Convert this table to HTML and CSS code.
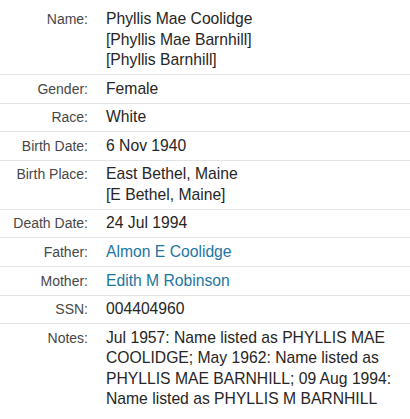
FILE: index.html
```html
<!DOCTYPE html>
<html>
<head>
<meta charset="utf-8">
<link rel="stylesheet" href="styles.css">
</head>
<body>
<div class="record">
  <div class="row"><div class="label">Name:</div><div class="value">Phyllis Mae Coolidge<br>[Phyllis Mae Barnhill]<br>[Phyllis Barnhill]</div></div>
  <div class="row"><div class="label">Gender:</div><div class="value">Female</div></div>
  <div class="row"><div class="label">Race:</div><div class="value">White</div></div>
  <div class="row"><div class="label">Birth Date:</div><div class="value">6 Nov 1940</div></div>
  <div class="row"><div class="label">Birth Place:</div><div class="value">East Bethel, Maine<br>[E Bethel, Maine]</div></div>
  <div class="row"><div class="label">Death Date:</div><div class="value">24 Jul 1994</div></div>
  <div class="row"><div class="label">Father:</div><div class="value"><a class="link" href="#">Almon E Coolidge</a></div></div>
  <div class="row"><div class="label">Mother:</div><div class="value"><a class="link" href="#">Edith M Robinson</a></div></div>
  <div class="row"><div class="label">SSN:</div><div class="value">004404960</div></div>
  <div class="row last"><div class="label">Notes:</div><div class="value">Jul 1957: Name listed as PHYLLIS MAE COOLIDGE; May 1962: Name listed as PHYLLIS MAE BARNHILL; 09 Aug 1994: Name listed as PHYLLIS M BARNHILL</div></div>
</div>
</body>
</html>
```
FILE: styles.css
```css
html, body {
  margin: 0;
  padding: 0;
  background: #fff;
}
.record {
  padding-top: 5.6px;
  font-family: "Liberation Sans", Arial, sans-serif;
}
.row {
  display: grid;
  grid-template-columns: 88px 1fr;
  column-gap: 18px;
  padding: 3.6px 0;
  border-bottom: 1px solid #e3e3e3;
  line-height: 20.4px;
}
.row.last {
  border-bottom: none;
}
.label {
  text-align: right;
  font-size: 14px;
  color: #474747;
}
.value {
  font-size: 15.7px;
  color: #262626;
  padding-right: 8px;
}
.link {
  color: #1c76a2;
  text-decoration: none;
}
```
